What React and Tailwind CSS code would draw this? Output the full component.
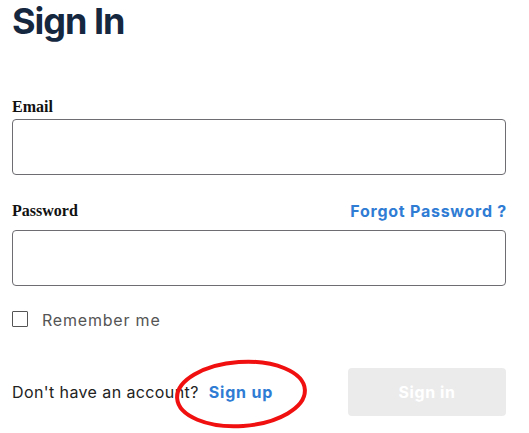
import React from "react";

export default function App() {
  const sans = { fontFamily: "Inter, 'Noto Sans', sans-serif" };
  return (
    <div className="relative w-[529px] h-[433px] bg-white overflow-hidden" style={sans}>
      <div className="pl-[12px] w-[506px]">
        <h1 className="text-[36px] leading-[43px] font-bold text-[#15273f] tracking-[-1px]">Sign In</h1>
        <label className="block mt-[52px] text-[16px] leading-[24px] font-bold text-[#111]" style={{ fontFamily: "'Liberation Serif', serif" }}>Email</label>
        <div className="h-[56px] border border-[#6d6d72] rounded-[4px]"></div>
        <div className="mt-[24px] flex items-center justify-between h-[24px]">
          <span className="text-[16px] leading-[24px] font-bold text-[#111]" style={{ fontFamily: "'Liberation Serif', serif" }}>Password</span>
          <span className="text-[16px] leading-[24px] font-bold text-[#2f7cd4] tracking-[0.75px] -mr-[1px]">Forgot Password ?</span>
        </div>
        <div className="mt-[7px] h-[56px] border border-[#6d6d72] rounded-[4px]"></div>
        <div className="mt-[25px] flex items-center h-[16px]">
          <div className="w-[16px] h-[16px] border border-[#555] rounded-[1px]"></div>
          <span className="ml-[14px] mt-[2px] text-[16px] leading-[20px] text-[#555] tracking-[0.8px]">Remember me</span>
        </div>
        <div className="mt-[41px] flex items-center justify-between">
          <div className="flex items-center text-[16px] leading-[24px] tracking-[0.4px]">
            <span className="text-[#222]">Don't have an account?</span>
            <span className="ml-[10px] font-bold text-[#2f7cd4] tracking-[0.8px]">Sign up</span>
          </div>
          <button className="w-[158px] h-[48px] bg-[#ebebeb] rounded-[4px] text-white font-bold text-[16px] tracking-[0.6px]">Sign in</button>
        </div>
      </div>
      <svg className="absolute left-0 top-0" width="529" height="433" viewBox="0 0 529 433">
        <ellipse cx="241" cy="394" rx="64" ry="32" fill="none" stroke="#f01010" strokeWidth="4" transform="rotate(-4 241 394)" />
      </svg>
    </div>
  );
}
